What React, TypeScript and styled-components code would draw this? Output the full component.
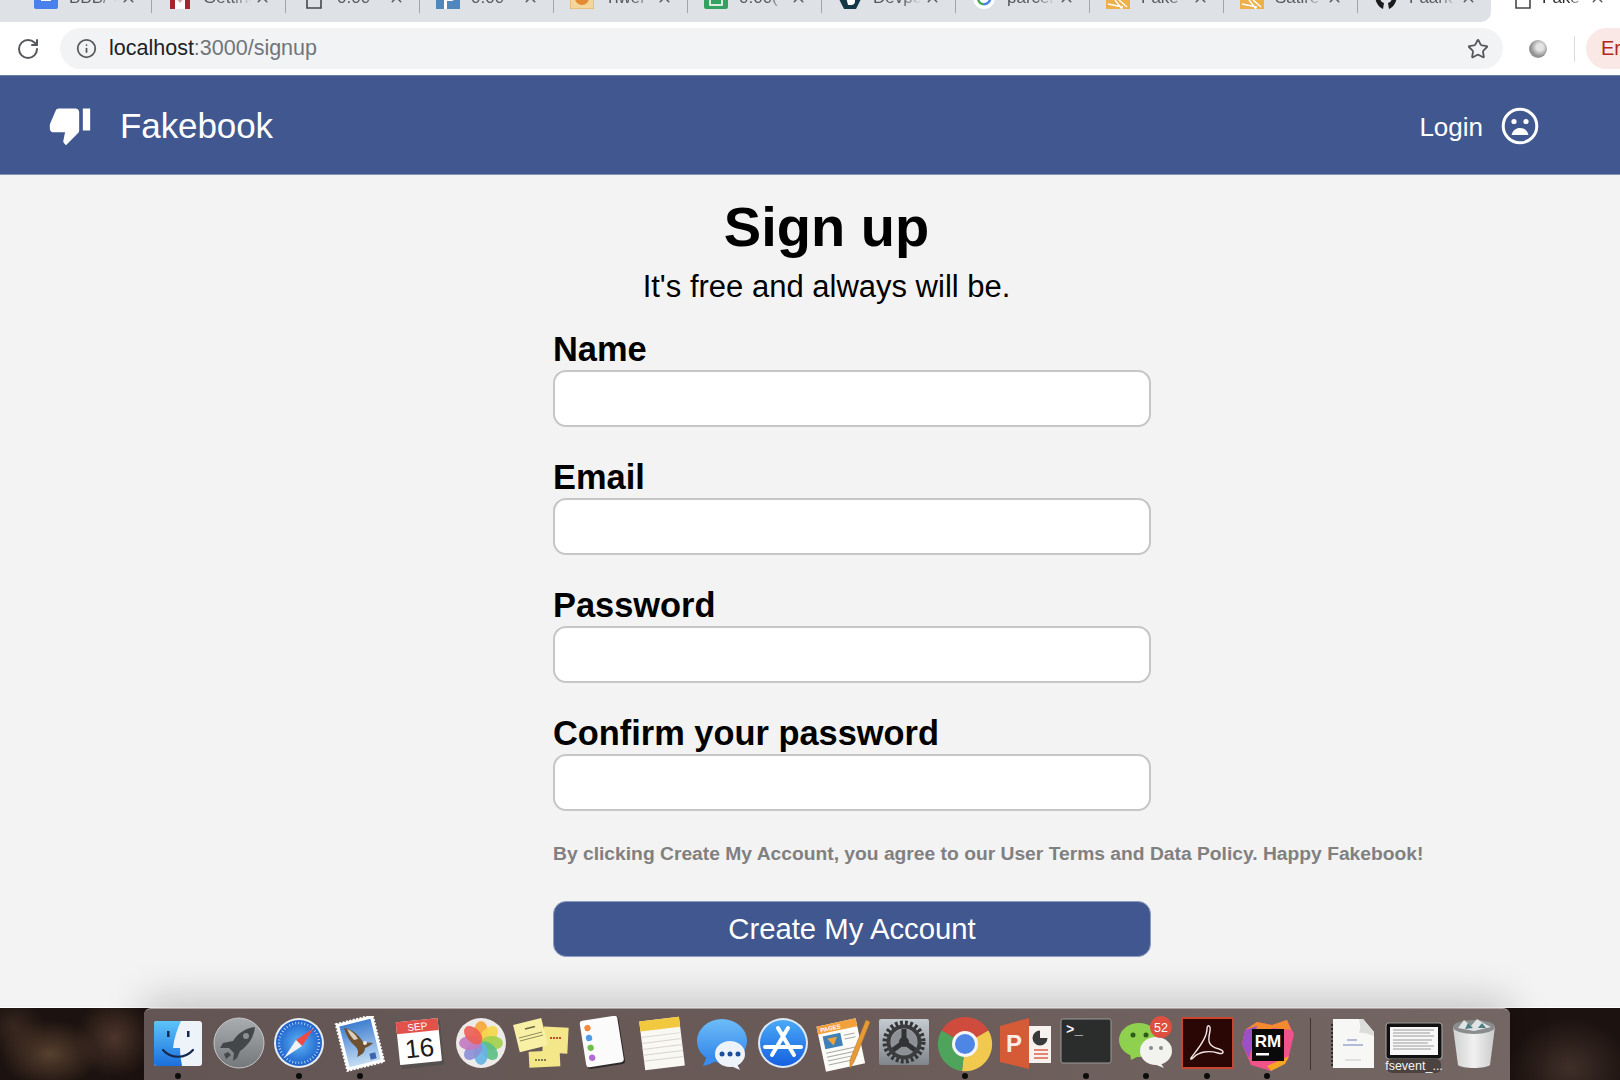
import React from "react";
import styled, { createGlobalStyle } from "styled-components";
import { Info, RotateCw, Star, X } from "lucide-react";
import { MdThumbDown } from "react-icons/md";

const Global = createGlobalStyle`
  html, body { margin: 0; padding: 0; background: #f3f3f3; }
  * { box-sizing: border-box; }
  body { font-family: "Liberation Sans", Arial, sans-serif; }
`;

const Screen = styled.div`
  width: 1620px;
  height: 1080px;
  overflow: hidden;
  display: flex;
  flex-direction: column;
  background: #f3f3f3;
`;

/* ---------- browser tabs ---------- */
const TabRow = styled.div`
  display: flex;
  height: 22px;
  flex: none;
  background: #fff;
`;
const TabStrip = styled.div`
  width: 1491px;
  height: 22px;
  display: flex;
  padding-left: 18px;
  background: #dee1e6;
  border-bottom-right-radius: 10px;
  overflow: hidden;
`;
const Tab = styled.div<{ $last?: boolean }>`
  flex: none;
  width: 134px;
  height: 13px;
  border-right: ${(p) => (p.$last ? "none" : "1px solid #a2a5a9")};
`;
const TabInner = styled.div`
  display: flex;
  align-items: center;
  height: 24px;
  margin-top: -15px;
  padding-left: 16px;
`;
const TabFavicon = styled.svg`
  flex: none;
  width: 24px;
  height: 24px;
`;
const TabTitle = styled.span`
  width: 48px;
  margin: 2px 0 0 11px;
  font-size: 17px;
  line-height: 24px;
  color: #55585c;
  white-space: nowrap;
  overflow: hidden;
  -webkit-mask-image: linear-gradient(90deg, #000 60%, transparent 100%);
  mask-image: linear-gradient(90deg, #000 60%, transparent 100%);
`;
const TabClose = styled(X)`
  flex: none;
  margin-left: 3px;
  color: #55585c;
`;
const ActiveTab = styled.div`
  flex: 1;
  display: flex;
  height: 22px;
  overflow: hidden;
`;
const ActiveInner = styled(TabInner)`
  margin-top: -15px;
  padding-left: 20px;
`;
const ActiveTitle = styled(TabTitle)`
  width: 44px;
  color: #2c2d2f;
  margin-left: 7px;
`;

/* ---------- toolbar ---------- */
const Toolbar = styled.div`
  height: 53px;
  flex: none;
  display: flex;
  align-items: center;
  background: #fff;
  padding-left: 16px;
`;
const Reload = styled(RotateCw)`
  flex: none;
  color: #55585c;
  margin-right: 20px;
`;
const Omnibox = styled.div`
  flex: none;
  width: 1443px;
  height: 41px;
  display: flex;
  align-items: center;
  padding: 0 14px 0 16px;
  border-radius: 21px;
  background: #f1f3f4;
`;
const InfoIcon = styled(Info)`
  flex: none;
  color: #55585c;
  margin-right: 12px;
`;
const UrlHost = styled.span`
  font-size: 21.5px;
  color: #202124;
`;
const UrlPath = styled.span`
  font-size: 21.5px;
  color: #70757a;
  flex: 1;
`;
const StarIcon = styled(Star)`
  flex: none;
  color: #55585c;
`;
const ExtensionOrb = styled.div`
  flex: none;
  width: 18px;
  height: 18px;
  margin-left: 26px;
  border-radius: 50%;
  background: radial-gradient(circle at 60% 40%, #e4e4e4 0 22%, #8f8f8f 60%, #b0b0b0 100%);
`;
const ToolbarDivider = styled.div`
  flex: none;
  width: 1px;
  height: 26px;
  margin-left: 27px;
  background: #dadce0;
`;
const ProfilePill = styled.div`
  flex: none;
  width: 80px;
  height: 41px;
  margin-left: 11px;
  padding-left: 15px;
  border-radius: 21px 0 0 21px;
  background: #fae8e6;
  color: #b3261e;
  font-size: 20px;
  line-height: 41px;
`;

/* ---------- site header ---------- */
const SiteHeader = styled.header`
  height: 100px;
  flex: none;
  display: flex;
  align-items: center;
  padding: 0 81px 0 48px;
  background: #41578f;
  border-top: 1px solid #6d7d9f;
  border-bottom: 1px solid #8593b5;
  color: #fff;
`;
const Brand = styled.div`
  flex: 1;
  font-size: 35px;
  letter-spacing: -0.1px;
  margin: 1px 0 0 28px;
`;
const LoginText = styled.span`
  font-size: 26px;
  margin: 5px 18px 0 0;
`;
const FrownIcon = styled.svg`
  flex: none;
  width: 38px;
  height: 38px;
  margin-top: 2px;
`;

/* ---------- form ---------- */
const Main = styled.main`
  flex: 1;
  padding: 20px 0 0 553px;
`;
const Intro = styled.div`
  width: 547px;
  margin-bottom: 19px;
  text-align: center;
  color: #000;
`;
const Title = styled.h1`
  margin: 0 0 4px;
  font-size: 56px;
  line-height: 64px;
  font-weight: 700;
`;
const Subtitle = styled.p`
  margin: 0;
  font-size: 31px;
  line-height: 48px;
`;
const Field = styled.div`
  width: 598px;
  margin-bottom: 31px;
`;
const FieldLabel = styled.label`
  display: block;
  margin-bottom: 2px;
  font-size: 34.4px;
  line-height: 38px;
  font-weight: 700;
  color: #000;
`;
const TextInput = styled.input`
  display: block;
  width: 598px;
  height: 57px;
  background: #fff;
  border: 2px solid #c6c6c6;
  border-radius: 13px;
  outline: none;
`;
const Terms = styled.p`
  margin: 0;
  font-size: 19.25px;
  line-height: 24px;
  font-weight: 700;
  white-space: nowrap;
  color: #808080;
`;
const SubmitButton = styled.button`
  display: block;
  width: 598px;
  height: 56px;
  margin-top: 35px;
  background: #41578f;
  border: 1px solid #8e9cc0;
  border-radius: 13px;
  color: #fff;
  font-family: inherit;
  font-size: 29.3px;
`;

/* ---------- dock ---------- */
const Desktop = styled.div`
  position: relative;
  height: 72px;
  flex: none;
  padding-left: 144px;
  background:
    radial-gradient(ellipse 50px 34px at 50px 46px, #57402f 0, transparent 100%),
    radial-gradient(ellipse 40px 40px at 115px 30px, #4d362c 0, transparent 100%),
    radial-gradient(ellipse 30px 30px at 15px 20px, #38271f 0, transparent 100%),
    radial-gradient(ellipse 60px 50px at 1570px 60px, #3f2f29 0, transparent 100%),
    #1c120f;
  box-shadow: 0 -1px 0 #fff;
`;
const DockBar = styled.div`
  position: relative;
  width: 1366px;
  height: 72px;
  display: flex;
  padding-left: 3.75px;
  background: linear-gradient(90deg, #625553, #6a5b58 50%, #746763);
  border-top: 1px solid #a9a19f;
  border-top-left-radius: 7px;
  border-top-right-radius: 7px;
  box-shadow: 0 -8px 40px rgba(0, 0, 0, 0.2);
`;
const DockItem = styled.div`
  position: relative;
  flex: none;
  width: 60.5px;
  height: 71px;
  padding-top: 7px;
  display: flex;
  justify-content: center;
`;
const RunningDot = styled.span`
  position: absolute;
  left: 50%;
  bottom: 1px;
  width: 6px;
  height: 6px;
  margin-left: -3px;
  border-radius: 50%;
  background: #0b0b0b;
`;
const DockDivider = styled.div`
  flex: none;
  width: 25.5px;
  height: 71px;
  padding-top: 9px;
  display: flex;
  justify-content: center;
  &::before {
    content: "";
    width: 1px;
    height: 52px;
    background: #3e3533;
  }
`;
const Glyph = styled.svg`
  display: block;
  flex: none;
  width: 60px;
  height: 60px;
`;

type SvgProps = { children: React.ReactNode };
const G = ({ children }: SvgProps) => <Glyph viewBox="0 0 60 60">{children}</Glyph>;

const Finder = () => (
  <G>
    <defs>
      <linearGradient id="fi" x1="0" y1="0" x2="0" y2="1">
        <stop offset="0" stopColor="#5cc4f8" />
        <stop offset="1" stopColor="#1c6fdc" />
      </linearGradient>
    </defs>
    <rect x="6" y="5" width="48" height="45" rx="3" fill="#eef2f9" />
    <path d="M9 5H33C29 14 26 22 25 32H32C32 38 33 44 34 50H9a3 3 0 0 1-3-3V8a3 3 0 0 1 3-3Z" fill="url(#fi)" />
    <rect x="19" y="15" width="2.5" height="6" fill="#14294d" />
    <rect x="39" y="15" width="2.5" height="6" fill="#14294d" />
    <path d="M15 34C23 43 37 43 45 34" fill="none" stroke="#14294d" strokeWidth="2.2" strokeLinecap="round" />
  </G>
);
const Launchpad = () => (
  <G>
    <defs>
      <linearGradient id="la" x1="0" y1="0" x2="0" y2="1">
        <stop offset="0" stopColor="#a9adaf" />
        <stop offset="1" stopColor="#74787a" />
      </linearGradient>
    </defs>
    <circle cx="30" cy="27" r="25" fill="url(#la)" stroke="#c3c6c7" strokeWidth="1" />
    <path d="M46 11C37 12 29 17 24 25L14 27L11 32L20 32L25 37L24 45L28 42L31 35C39 30 45 21 46 11Z" fill="#43474a" />
    <path d="M15 38L19 36L22 39L17 43Z" fill="#43474a" />
    <circle cx="37" cy="20" r="3" fill="#8b8f91" />
  </G>
);
const Safari = () => (
  <G>
    <defs>
      <radialGradient id="sa">
        <stop offset="0" stopColor="#5fb6f5" />
        <stop offset="1" stopColor="#1b5fcb" />
      </radialGradient>
    </defs>
    <circle cx="30" cy="27" r="25" fill="#e8edf3" />
    <circle cx="30" cy="27" r="23" fill="url(#sa)" />
    <circle cx="30" cy="27" r="20" fill="none" stroke="#cfe3f8" strokeWidth="2.5" strokeDasharray="0.8 2.3" />
    <path d="M45 12L27 24L33 30Z" fill="#ef4a45" />
    <path d="M15 42L27 24L33 30Z" fill="#f2f2f2" />
  </G>
);
const Mail = () => (
  <G>
    <defs>
      <linearGradient id="ma" x1="0" y1="0" x2="0" y2="1">
        <stop offset="0" stopColor="#3f7fd0" />
        <stop offset="1" stopColor="#c4dcf3" />
      </linearGradient>
    </defs>
    <circle cx="45" cy="42" r="8" fill="#5f5250" stroke="#77696a" strokeWidth="0.7" />
    <g transform="rotate(-14 30 27)">
      <rect x="11" y="3" width="38" height="48" fill="#fff" stroke="#fff" strokeWidth="2" strokeDasharray="2 1.5" />
      <rect x="14" y="6" width="32" height="42" fill="url(#ma)" />
    </g>
    <path d="M14 12C22 13 29 19 33 26L43 27C40 30 37 31 35 32C35 37 31 39 27 41C29 36 28 33 25 30C20 26 16 19 14 12Z" fill="#6d5130" />
    <path d="M17 13C22 15 25 18 28 23L24 24C21 21 19 17 17 13Z" fill="#d9cfbd" />
    <circle cx="35" cy="27" r="2" fill="#efe9dc" />
    <rect x="40" y="37" width="6" height="6" fill="#3c67b0" transform="rotate(-14 43 40)" />
  </G>
);
const Calendar = () => (
  <G>
    <g transform="rotate(-6 30 27)">
      <rect x="9" y="6" width="43" height="45" rx="1.5" fill="#55504f" />
      <rect x="8" y="4" width="42" height="43" rx="1" fill="#fff" />
      <path d="M8 5a1 1 0 0 1 1-1H49a1 1 0 0 1 1 1V16H8Z" fill="#e2524b" />
      <text x="29" y="14" textAnchor="middle" fontFamily="Liberation Sans" fontSize="10" fill="#fff">SEP</text>
      <text x="29" y="41" textAnchor="middle" fontFamily="Liberation Sans" fontSize="26" fill="#1c1c1c">16</text>
    </g>
  </G>
);
const Photos = () => {
  const colors = ["#f7a63c", "#f4d64a", "#a3cf4e", "#5cbf83", "#67b4e4", "#8c8fd6", "#c27bc0", "#ec5f57"];
  return (
    <G>
      <circle cx="30" cy="27" r="25" fill="#eeeaea" />
      {colors.map((c, i) => (
        <ellipse key={c} cx="30" cy="16" rx="7" ry="11" fill={c} fillOpacity="0.92" transform={`rotate(${i * 45} 30 27)`} />
      ))}
    </G>
  );
};
const Stickies = () => (
  <G>
    <rect x="32" y="11" width="25" height="26" fill="#f4e78a" transform="rotate(3 44 24)" />
    <rect x="5" y="5" width="29" height="28" fill="#f8f0a5" transform="rotate(-14 20 19)" />
    <path d="M8 22L31 16M9 25L32 19" stroke="#8d8a5c" strokeWidth="1" />
    <path d="M14 13L24 10.5" stroke="#6d6b4a" strokeWidth="1.4" />
    <path d="M39 22H51" stroke="#c24a32" strokeWidth="2" strokeDasharray="2 1" />
    <rect x="18" y="35" width="31" height="16" fill="#f4e78a" transform="rotate(-3 33 43)" />
    <path d="M24 44H35" stroke="#5a5a3a" strokeWidth="1.6" strokeDasharray="2 1" />
  </G>
);
const Reminders = () => (
  <G>
    <g transform="rotate(-9 30 27)">
      <rect x="12" y="3" width="38" height="48" rx="3" fill="#2e2a2a" />
      <rect x="11" y="2" width="38" height="47" rx="3" fill="#fbfbfb" />
      <circle cx="18" cy="10" r="3.2" fill="#f08a3c" />
      <circle cx="18" cy="20" r="3.2" fill="#4a9be8" />
      <circle cx="18" cy="30" r="3.2" fill="#6cc04a" />
      <circle cx="18" cy="40" r="3.2" fill="#b569d8" />
    </g>
  </G>
);
const Notes = () => (
  <G>
    <g transform="rotate(-7 30 27)">
      <rect x="10" y="3" width="40" height="49" fill="#faf8f2" />
      <rect x="10" y="3" width="40" height="10" fill="#f2c93e" />
      <path d="M10 19H50M10 25H50M10 31H50M10 37H50M10 43H50" stroke="#d8d5cc" strokeWidth="1" />
    </g>
  </G>
);
const Messages = () => (
  <G>
    <defs>
      <linearGradient id="me" x1="0" y1="0" x2="0" y2="1">
        <stop offset="0" stopColor="#6dbcf8" />
        <stop offset="1" stopColor="#2f84ea" />
      </linearGradient>
    </defs>
    <ellipse cx="29" cy="25" rx="25" ry="22" fill="url(#me)" />
    <path d="M14 40L10 50C15 49 20 47 24 44Z" fill="#3a8dee" />
    <ellipse cx="37" cy="38" rx="15" ry="13" fill="#eef3fa" />
    <path d="M44 48L47 54L38 50Z" fill="#eef3fa" />
    <circle cx="29" cy="38" r="2.5" fill="#1f4f97" />
    <circle cx="37" cy="38" r="2.5" fill="#1f4f97" />
    <circle cx="45" cy="38" r="2.5" fill="#1f4f97" />
  </G>
);
const AppStore = () => (
  <G>
    <defs>
      <linearGradient id="ap" x1="0" y1="0" x2="0" y2="1">
        <stop offset="0" stopColor="#4aa9f6" />
        <stop offset="1" stopColor="#1560e0" />
      </linearGradient>
    </defs>
    <circle cx="30" cy="27" r="25" fill="#dfe9f4" />
    <circle cx="30" cy="27" r="23" fill="url(#ap)" />
    <path d="M35 12L19 39M25 12L41 39M12 31H48" stroke="#fff" strokeWidth="4" strokeLinecap="round" fill="none" />
  </G>
);
const Pages = () => (
  <G>
    <g transform="rotate(-12 27 30)">
      <rect x="7" y="6" width="40" height="46" fill="#fbfbf7" />
      <rect x="7" y="6" width="40" height="8" fill="#f2a03b" />
      <text x="10" y="12.5" fontFamily="Liberation Sans" fontSize="6" fontWeight="700" fill="#fff">PAGES</text>
      <rect x="11" y="17" width="18" height="13" fill="#3f80b8" />
      <path d="M15 20H25L20 28Z" fill="#f0a33c" />
      <path d="M11 34H42M11 38H42M11 42H42M11 46H36M32 20H43M32 24H43" stroke="#a9a9a3" strokeWidth="1" />
    </g>
    <path d="M52 4L56 6L40 46L36 52L36 44Z" fill="#e79b35" stroke="#b9772a" strokeWidth="0.6" />
  </G>
);
const Settings = () => (
  <G>
    <defs>
      <linearGradient id="se" x1="0" y1="0" x2="0" y2="1">
        <stop offset="0" stopColor="#c4cbd1" />
        <stop offset="1" stopColor="#80868b" />
      </linearGradient>
    </defs>
    <rect x="5" y="3" width="50" height="46" rx="2" fill="url(#se)" />
    <circle cx="30" cy="26" r="19" fill="none" stroke="#353637" strokeWidth="5" strokeDasharray="2.8 2.2" />
    <circle cx="30" cy="26" r="15.5" fill="none" stroke="#3b3c3d" strokeWidth="4" />
    <circle cx="30" cy="26" r="13" fill="#8d9196" />
    <path d="M30 26V13M30 26L19 34M30 26L41 34" stroke="#323334" strokeWidth="5" />
    <circle cx="30" cy="26" r="5" fill="#323334" />
  </G>
);
const Chrome = () => (
  <G>
    <path d="M6.6 14.5A27 27 0 0 1 53.4 14.5L30 28Z" fill="#cf4b3e" />
    <path d="M53.4 14.5A27 27 0 0 1 27 55L30 28Z" fill="#f2c94f" />
    <path d="M27 55A27 27 0 0 1 6.6 14.5L30 28Z" fill="#4fa45c" />
    <circle cx="30" cy="28" r="13" fill="#f3f5f8" />
    <circle cx="30" cy="28" r="10" fill="#4e86e6" />
  </G>
);
const PowerPoint = () => (
  <G>
    <rect x="26" y="10" width="30" height="37" fill="#f7f2ee" />
    <path d="M45 14.5a7.5 7.5 0 1 0 7.5 7.5H45Z" fill="#3a3a3a" />
    <path d="M39 34H53M39 38H53M39 42H53" stroke="#d9634b" strokeWidth="1.6" />
    <path d="M5 10L34 2V53L5 46Z" fill="#d55b37" />
    <text x="19" y="36" textAnchor="middle" fontFamily="Liberation Sans" fontWeight="700" fontSize="24" fill="#f8ece6">P</text>
  </G>
);
const Terminal = () => (
  <G>
    <rect x="5" y="3" width="50" height="44" rx="2" fill="#2b2c2c" stroke="#9a9a9a" strokeWidth="1" />
    <text x="10" y="18" fontFamily="Liberation Mono" fontWeight="700" fontSize="14" fill="#f5f5f5">&gt;_</text>
  </G>
);
const WeChat = () => (
  <G>
    <ellipse cx="23" cy="24" rx="20" ry="17" fill="#8fd14f" />
    <path d="M14 37L15 44L23 40Z" fill="#8fd14f" />
    <circle cx="17" cy="19" r="2.5" fill="#2f5a18" />
    <circle cx="30" cy="19" r="2.5" fill="#2f5a18" />
    <ellipse cx="40" cy="35" rx="16" ry="14" fill="#f2f2ef" />
    <path d="M44 46L48 52L38 48Z" fill="#f2f2ef" />
    <circle cx="35" cy="32" r="2" fill="#8a8a8a" />
    <circle cx="45" cy="32" r="2" fill="#8a8a8a" />
    <circle cx="45" cy="11" r="11" fill="#dd4f3f" />
    <text x="45" y="15.5" textAnchor="middle" fontFamily="Liberation Sans" fontSize="12.5" fill="#fff">52</text>
  </G>
);
const Acrobat = () => (
  <G>
    <rect x="5" y="2" width="51" height="50" fill="#2a0705" stroke="#c8452f" strokeWidth="2" />
    <path
      d="M14 42C18 36 30 24 30 13C30 8 34 9 33 15C31 24 30 30 42 33C48 35 47 39 41 37C31 34 22 36 17 41C15 43 13 44 14 42Z"
      fill="none"
      stroke="#f0e6e2"
      strokeWidth="1.4"
    />
  </G>
);
const RubyMine = () => (
  <G>
    <path d="M20 6L35 9L50 4L57 18L51 44L34 55L14 49L5 28L8 14Z" fill="#f0528a" />
    <path d="M20 6L35 9L50 4L54 14L36 12L8 28L8 14Z" fill="#f28a2e" />
    <path d="M5 28L8 14L20 10L12 42Z" fill="#9c4fc7" />
    <path d="M30 50L52 40L48 48L34 55Z" fill="#f5a623" />
    <rect x="15" y="13" width="32" height="32" fill="#0a0a0a" />
    <text x="31" y="31" textAnchor="middle" fontFamily="Liberation Sans" fontWeight="700" fontSize="17" fill="#fff">RM</text>
    <rect x="19" y="37" width="13" height="2.5" fill="#fff" />
  </G>
);
const PdfDoc = () => (
  <G>
    <path d="M10 3H40L51 16V52H10Z" fill="#f7f7f6" />
    <path d="M36 3L40 3L51 16L51 20C45 17 38 16 36 17C38 12 37 7 36 3Z" fill="#dcdcda" />
    <path d="M9 8V50" stroke="#2a2a2a" strokeWidth="2" strokeDasharray="2 2" />
    <path d="M24 24H34M20 29H40" stroke="#6c83b5" strokeWidth="1" />
    <path d="M22 44H38" stroke="#c8c8c8" strokeWidth="1" />
  </G>
);
const FseventDoc = () => (
  <G>
    <rect x="2" y="7" width="56" height="36" rx="3" fill="#111" stroke="#989898" strokeWidth="1.2" />
    <rect x="6" y="11" width="48" height="28" fill="#f8f8f8" />
    <path d="M9 14H50M9 17H46M9 20H50M9 24H48M9 27H44M9 30H50M9 33H47" stroke="#9a9a9a" strokeWidth="1.2" />
    <rect x="3" y="43" width="54" height="14" rx="5" fill="#4c4341" />
    <text x="30" y="54" textAnchor="middle" fontFamily="Liberation Sans" fontSize="12.5" fill="#f4f4f4">fsevent_...</text>
  </G>
);
const Trash = () => (
  <G>
    <defs>
      <linearGradient id="tr" x1="0" y1="0" x2="1" y2="0">
        <stop offset="0" stopColor="#cfd0d0" />
        <stop offset="0.5" stopColor="#f1f1f1" />
        <stop offset="1" stopColor="#c8c9c9" />
      </linearGradient>
    </defs>
    <path d="M9 11L14 49C18 53 42 53 46 49L51 11Z" fill="url(#tr)" />
    <ellipse cx="30" cy="11" rx="21" ry="7" fill="#8a8d8d" />
    <path d="M14 12L20 4L27 10L33 3L41 8L47 11L30 15Z" fill="#dfe3e3" />
    <path d="M24 7L29 12L21 13ZM38 7L42 12L34 12Z" fill="#4d7e80" />
  </G>
);

const mainApps: { key: string; Icon: () => React.ReactElement; running?: boolean }[] = [
  { key: "finder", Icon: Finder, running: true },
  { key: "launchpad", Icon: Launchpad },
  { key: "safari", Icon: Safari, running: true },
  { key: "mail", Icon: Mail, running: true },
  { key: "calendar", Icon: Calendar },
  { key: "photos", Icon: Photos },
  { key: "stickies", Icon: Stickies },
  { key: "reminders", Icon: Reminders },
  { key: "notes", Icon: Notes },
  { key: "messages", Icon: Messages },
  { key: "appstore", Icon: AppStore },
  { key: "pages", Icon: Pages },
  { key: "settings", Icon: Settings },
  { key: "chrome", Icon: Chrome, running: true },
  { key: "powerpoint", Icon: PowerPoint },
  { key: "terminal", Icon: Terminal, running: true },
  { key: "wechat", Icon: WeChat, running: true },
  { key: "acrobat", Icon: Acrobat, running: true },
  { key: "rubymine", Icon: RubyMine, running: true },
];
const stackApps = [
  { key: "pdf", Icon: PdfDoc },
  { key: "fsevent", Icon: FseventDoc },
  { key: "trash", Icon: Trash },
];

/* ---------- favicons ---------- */
const OutlineDoc = () => <path d="M5 -4H19V23H5Z" fill="none" stroke="#45484c" strokeWidth="1.6" />;
const favicons: Record<string, React.ReactNode> = {
  docs: (
    <>
      <rect x="0" y="0" width="24" height="24" rx="2" fill="#4a80ec" />
      <rect x="7" y="14" width="10" height="2" fill="#fff" />
    </>
  ),
  gmail: (
    <>
      <rect x="2" y="0" width="20" height="24" fill="#fff" />
      <rect x="2" y="0" width="5" height="24" fill="#a4262c" />
      <rect x="17" y="0" width="5" height="24" fill="#a4262c" />
      <path d="M7 12L12 18L17 12" fill="#d9a5a5" />
    </>
  ),
  doc: <OutlineDoc />,
  pblue: (
    <>
      <rect x="0" y="0" width="24" height="24" fill="#4f88bd" />
      <path d="M8 8H15A4 4 0 0 1 15 16H11V24H8Z" fill="#fff" />
    </>
  ),
  tiwer: (
    <>
      <rect x="0" y="0" width="24" height="24" rx="1" fill="#f3d79a" stroke="#d9a75a" />
      <circle cx="12" cy="13" r="7" fill="#e48a35" />
    </>
  ),
  sheet: (
    <>
      <rect x="0" y="0" width="24" height="24" rx="2" fill="#35a15f" />
      <rect x="6" y="13" width="12" height="7" fill="none" stroke="#fff" strokeWidth="1.6" />
    </>
  ),
  dev: (
    <>
      <path d="M0 12H24L18 24H6Z" fill="#143845" />
      <path d="M8 12H13A4 4 0 0 1 13 20H10L9 16Z" fill="#fff" />
    </>
  ),
  google: (
    <>
      <circle cx="12" cy="13" r="11" fill="#fff" />
      <path d="M5 15A7.5 7.5 0 0 0 12 20.5V18A5 5 0 0 1 7.3 14Z" fill="#4fa45c" />
      <path d="M12 20.5A7.5 7.5 0 0 0 19.5 13H17A5 5 0 0 1 12 18Z" fill="#4e86e6" />
      <path d="M17 13H19.5L19 10H16.5Z" fill="#f2c94f" />
    </>
  ),
  fake: (
    <>
      <rect x="0" y="0" width="24" height="24" fill="#eeb04a" />
      <path d="M9 15L16 24M13 15L21 22M2 19L17 22" stroke="#fff" strokeWidth="1.4" fill="none" />
    </>
  ),
  github: (
    <>
      <path d="M1 8A11 15 0 0 0 9 24L10 18C6 17 5 12 5 8Z" fill="#1b1b1b" />
      <path d="M23 8A11 15 0 0 1 15 24L14 18C18 17 19 12 19 8Z" fill="#1b1b1b" />
    </>
  ),
};

const tabs = [
  { title: "BBB/ CS", icon: "docs" },
  { title: "Getting", icon: "gmail" },
  { title: "0.00-", icon: "doc" },
  { title: "0.00-", icon: "pblue" },
  { title: "Tiwer", icon: "tiwer" },
  { title: "0.00(", icon: "sheet" },
  { title: "Devpo", icon: "dev" },
  { title: "parcel", icon: "google" },
  { title: "Fake", icon: "fake" },
  { title: "Satire", icon: "fake" },
  { title: "Faark", icon: "github" },
];

const fields = ["Name", "Email", "Password", "Confirm your password"];

export default function App() {
  return (
    <Screen>
      <Global />
      <TabRow>
        <TabStrip>
          {tabs.map((t, i) => (
            <Tab key={i} $last={i === tabs.length - 1}>
              <TabInner>
                <TabFavicon viewBox="0 0 24 24">{favicons[t.icon]}</TabFavicon>
                <TabTitle>{t.title}</TabTitle>
                <TabClose size={17} strokeWidth={2} />
              </TabInner>
            </Tab>
          ))}
        </TabStrip>
        <ActiveTab>
          <ActiveInner>
            <TabFavicon viewBox="0 0 24 24">{favicons.doc}</TabFavicon>
            <ActiveTitle>Fake</ActiveTitle>
            <TabClose size={17} strokeWidth={2} />
          </ActiveInner>
        </ActiveTab>
      </TabRow>

      <Toolbar>
        <Reload size={24} strokeWidth={2} />
        <Omnibox>
          <InfoIcon size={21} strokeWidth={2} />
          <UrlHost>localhost</UrlHost>
          <UrlPath>:3000/signup</UrlPath>
          <StarIcon size={22} strokeWidth={2} />
        </Omnibox>
        <ExtensionOrb />
        <ToolbarDivider />
        <ProfilePill>Er</ProfilePill>
      </Toolbar>

      <SiteHeader>
        <MdThumbDown size={44} />
        <Brand>Fakebook</Brand>
        <LoginText>Login</LoginText>
        <FrownIcon viewBox="0 0 38 38" aria-hidden="true">
          <circle cx="19" cy="19" r="16.8" fill="none" stroke="#fff" strokeWidth="3" />
          <circle cx="13" cy="14.5" r="2.6" fill="#fff" />
          <circle cx="25" cy="14.5" r="2.6" fill="#fff" />
          <path d="M10.5 28C12 23 15 21 19 21C23 21 26 23 27.5 28Z" fill="#fff" />
        </FrownIcon>
      </SiteHeader>

      <Main>
        <Intro>
          <Title>Sign up</Title>
          <Subtitle>It's free and always will be.</Subtitle>
        </Intro>
        {fields.map((f) => (
          <Field key={f}>
            <FieldLabel>{f}</FieldLabel>
            <TextInput type={f.toLowerCase().includes("password") ? "password" : "text"} />
          </Field>
        ))}
        <Terms>By clicking Create My Account, you agree to our User Terms and Data Policy. Happy Fakebook!</Terms>
        <SubmitButton>Create My Account</SubmitButton>
      </Main>

      <Desktop>
        <DockBar>
          {mainApps.map(({ key, Icon, running }) => (
            <DockItem key={key}>
              <Icon />
              {running && <RunningDot />}
            </DockItem>
          ))}
          <DockDivider />
          {stackApps.map(({ key, Icon }) => (
            <DockItem key={key}>
              <Icon />
            </DockItem>
          ))}
        </DockBar>
      </Desktop>
    </Screen>
  );
}
